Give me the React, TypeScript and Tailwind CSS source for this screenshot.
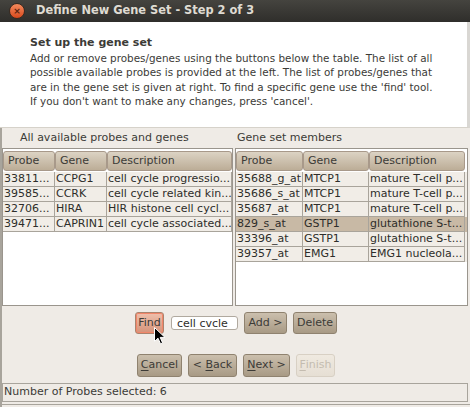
import React from "react";

const leftRows = [
  ["33811...", "CCPG1", "cell cycle progressio..."],
  ["39585...", "CCRK", "cell cycle related kin..."],
  ["32706...", "HIRA", "HIR histone cell cycl..."],
  ["39471...", "CAPRIN1", "cell cycle associated..."],
];

const rightRows = [
  ["35688_g_at", "MTCP1", "mature T-cell p..."],
  ["35686_s_at", "MTCP1", "mature T-cell p..."],
  ["35687_at", "MTCP1", "mature T-cell p..."],
  ["829_s_at", "GSTP1", "glutathione S-t..."],
  ["33396_at", "GSTP1", "glutathione S-t..."],
  ["39357_at", "EMG1", "EMG1 nucleola..."],
];

function GeneTable({
  rows,
  widths,
  selected,
  className,
}: {
  rows: string[][];
  widths: number[];
  selected?: number;
  className: string;
}) {
  const headers = ["Probe", "Gene", "Description"];
  return (
    <div className={`flex flex-col border border-[#9a958d] bg-white ${className}`}>
      <div className="flex h-[23px] pt-[2px] pb-[1px]">
        {headers.map((h, i) => (
          <div
            key={h}
            style={{ width: widths[i] }}
            className="flex items-center rounded-[3px] border border-[#a8998a] bg-gradient-to-b from-[#dcd3c4] to-[#bcad97] pl-[4px] text-[#3c3b37]"
          >
            {h}
          </div>
        ))}
      </div>
      {rows.map((r, ri) => (
        <div
          key={ri}
          className={`flex h-[15px] ${ri === selected ? "bg-[#c8b9a5]" : "bg-[#f1ede7]"}`}
        >
          {r.map((c, ci) => (
            <div
              key={ci}
              style={{ width: widths[ci] }}
              className="overflow-hidden whitespace-nowrap border-b border-r border-[#a9a49b] pl-[1px] leading-[14px] text-[#2e2d2a]"
            >
              {c}
            </div>
          ))}
        </div>
      ))}
    </div>
  );
}

function Btn({
  children,
  className = "",
}: {
  children: React.ReactNode;
  className?: string;
}) {
  return (
    <div
      className={`flex h-[22px] items-center justify-center rounded-[3px] border border-[#8f826f] bg-gradient-to-b from-[#cbbfad] to-[#a89a85] text-[#3c3b37] ${className}`}
    >
      {children}
    </div>
  );
}

export default function App() {
  return (
    <div className="relative flex h-[407px] w-[470px] flex-col overflow-hidden bg-[#efebe6] font-['DejaVu_Sans',sans-serif] text-[11px]">
      {/* title bar */}
      <div className="flex h-[22px] shrink-0 items-center bg-gradient-to-b from-[#45443f] to-[#2f2e2b]">
        <div className="ml-[9px] flex h-[16px] w-[16px] items-center justify-center rounded-full border border-[#3a2a20] bg-gradient-to-b from-[#f38a5c] to-[#d8481a]">
          <span className="text-[9px] font-bold leading-none text-[#5a2410]">×</span>
        </div>
        <span className="ml-[11px] text-[11.4px] font-bold text-[#dfdbd2]">
          Define New Gene Set - Step 2 of 3
        </span>
      </div>

      {/* header */}
      <div className="h-[106px] shrink-0 border-b border-r-[3px] border-b-[#d6d2ca] border-r-[#d9d7d3] bg-white pl-[30px] pt-[14px] text-[10.4px] leading-[14.5px] text-[#3c3b37]">
        <div className="text-[11px] font-bold">Set up the gene set</div>
        <div>Add or remove probes/genes using the buttons below the table. The list of all</div>
        <div>possible available probes is provided at the left. The list of probes/genes that</div>
        <div>are in the gene set is given at right. To find a specific gene use the 'find' tool.</div>
        <div>If you don't want to make any changes, press 'cancel'.</div>
      </div>

      <div className="flex flex-1 flex-col border-l-2 border-[#a8a49c]">
        {/* labels */}
        <div className="flex h-[20px] items-center text-[#3c3b37]">
          <div className="w-[233px] pl-[18px]">All available probes and genes</div>
          <div className="pl-[2px]">Gene set members</div>
        </div>

        {/* tables */}
        <div className="flex h-[158px] gap-[2px]">
          <GeneTable rows={leftRows} widths={[52, 52, 125]} className="w-[231px]" />
          <GeneTable
            rows={rightRows}
            widths={[67, 66, 96]}
            selected={3}
            className="w-[233px]"
          />
        </div>

        {/* buttons */}
        <div className="flex flex-col items-center pt-[6px] text-[11px]">
          <div className="flex h-[22px] items-center gap-[6px]">
            <Btn className="w-[29px] border-[#a9846f] from-[#efc0ac] to-[#d4937a] shadow-[inset_0_0_0_1px_#f2866a]">
              Find
            </Btn>
            <div className="ml-[1px] flex h-[14px] w-[67px] items-center rounded-[3px] border border-[#b0a99f] bg-white pl-[5px] leading-none text-[#2e2d2a]">
              cell cvcle
            </div>
            <Btn className="w-[43px]">Add &gt;</Btn>
            <Btn className="w-[44px]">Delete</Btn>
          </div>
          <div className="mt-[20px] flex h-[23px] items-center gap-[6px]">
            <Btn className="h-[23px] w-[45px]">
              <span className="underline underline-offset-2">C</span>ancel
            </Btn>
            <Btn className="h-[23px] w-[49px]">
              &lt;&nbsp;<span className="underline underline-offset-2">B</span>ack
            </Btn>
            <Btn className="h-[23px] w-[47px]">
              <span className="underline underline-offset-2">N</span>ext &gt;
            </Btn>
            <Btn className="h-[23px] w-[39px] border-[#d8d0c4] from-[#efe9e0] to-[#e6dfd4] text-[#c4bcb0]">
              <span className="underline underline-offset-2">F</span>inish
            </Btn>
          </div>
        </div>

        {/* status bar */}
        <div className="mt-[6px] mr-[2px] flex h-[19px] items-center border border-[#a8a49c] pl-[1px] text-[#3c3b37]">
          Number of Probes selected: 6
        </div>
        <div className="mt-[2px] border-t border-[#a8a49c]" />
      </div>

      {/* mouse cursor */}
      <svg
        className="absolute left-[154px] top-[327px]"
        width="12"
        height="18"
        viewBox="0 0 12 18"
      >
        <path
          d="M0.5 0.5 L0.5 14.5 L4 11.2 L6.5 16.8 L8.6 15.9 L6.2 10.4 L11 10.4 Z"
          fill="#000"
          stroke="#fff"
          strokeWidth="1"
        />
      </svg>
    </div>
  );
}
